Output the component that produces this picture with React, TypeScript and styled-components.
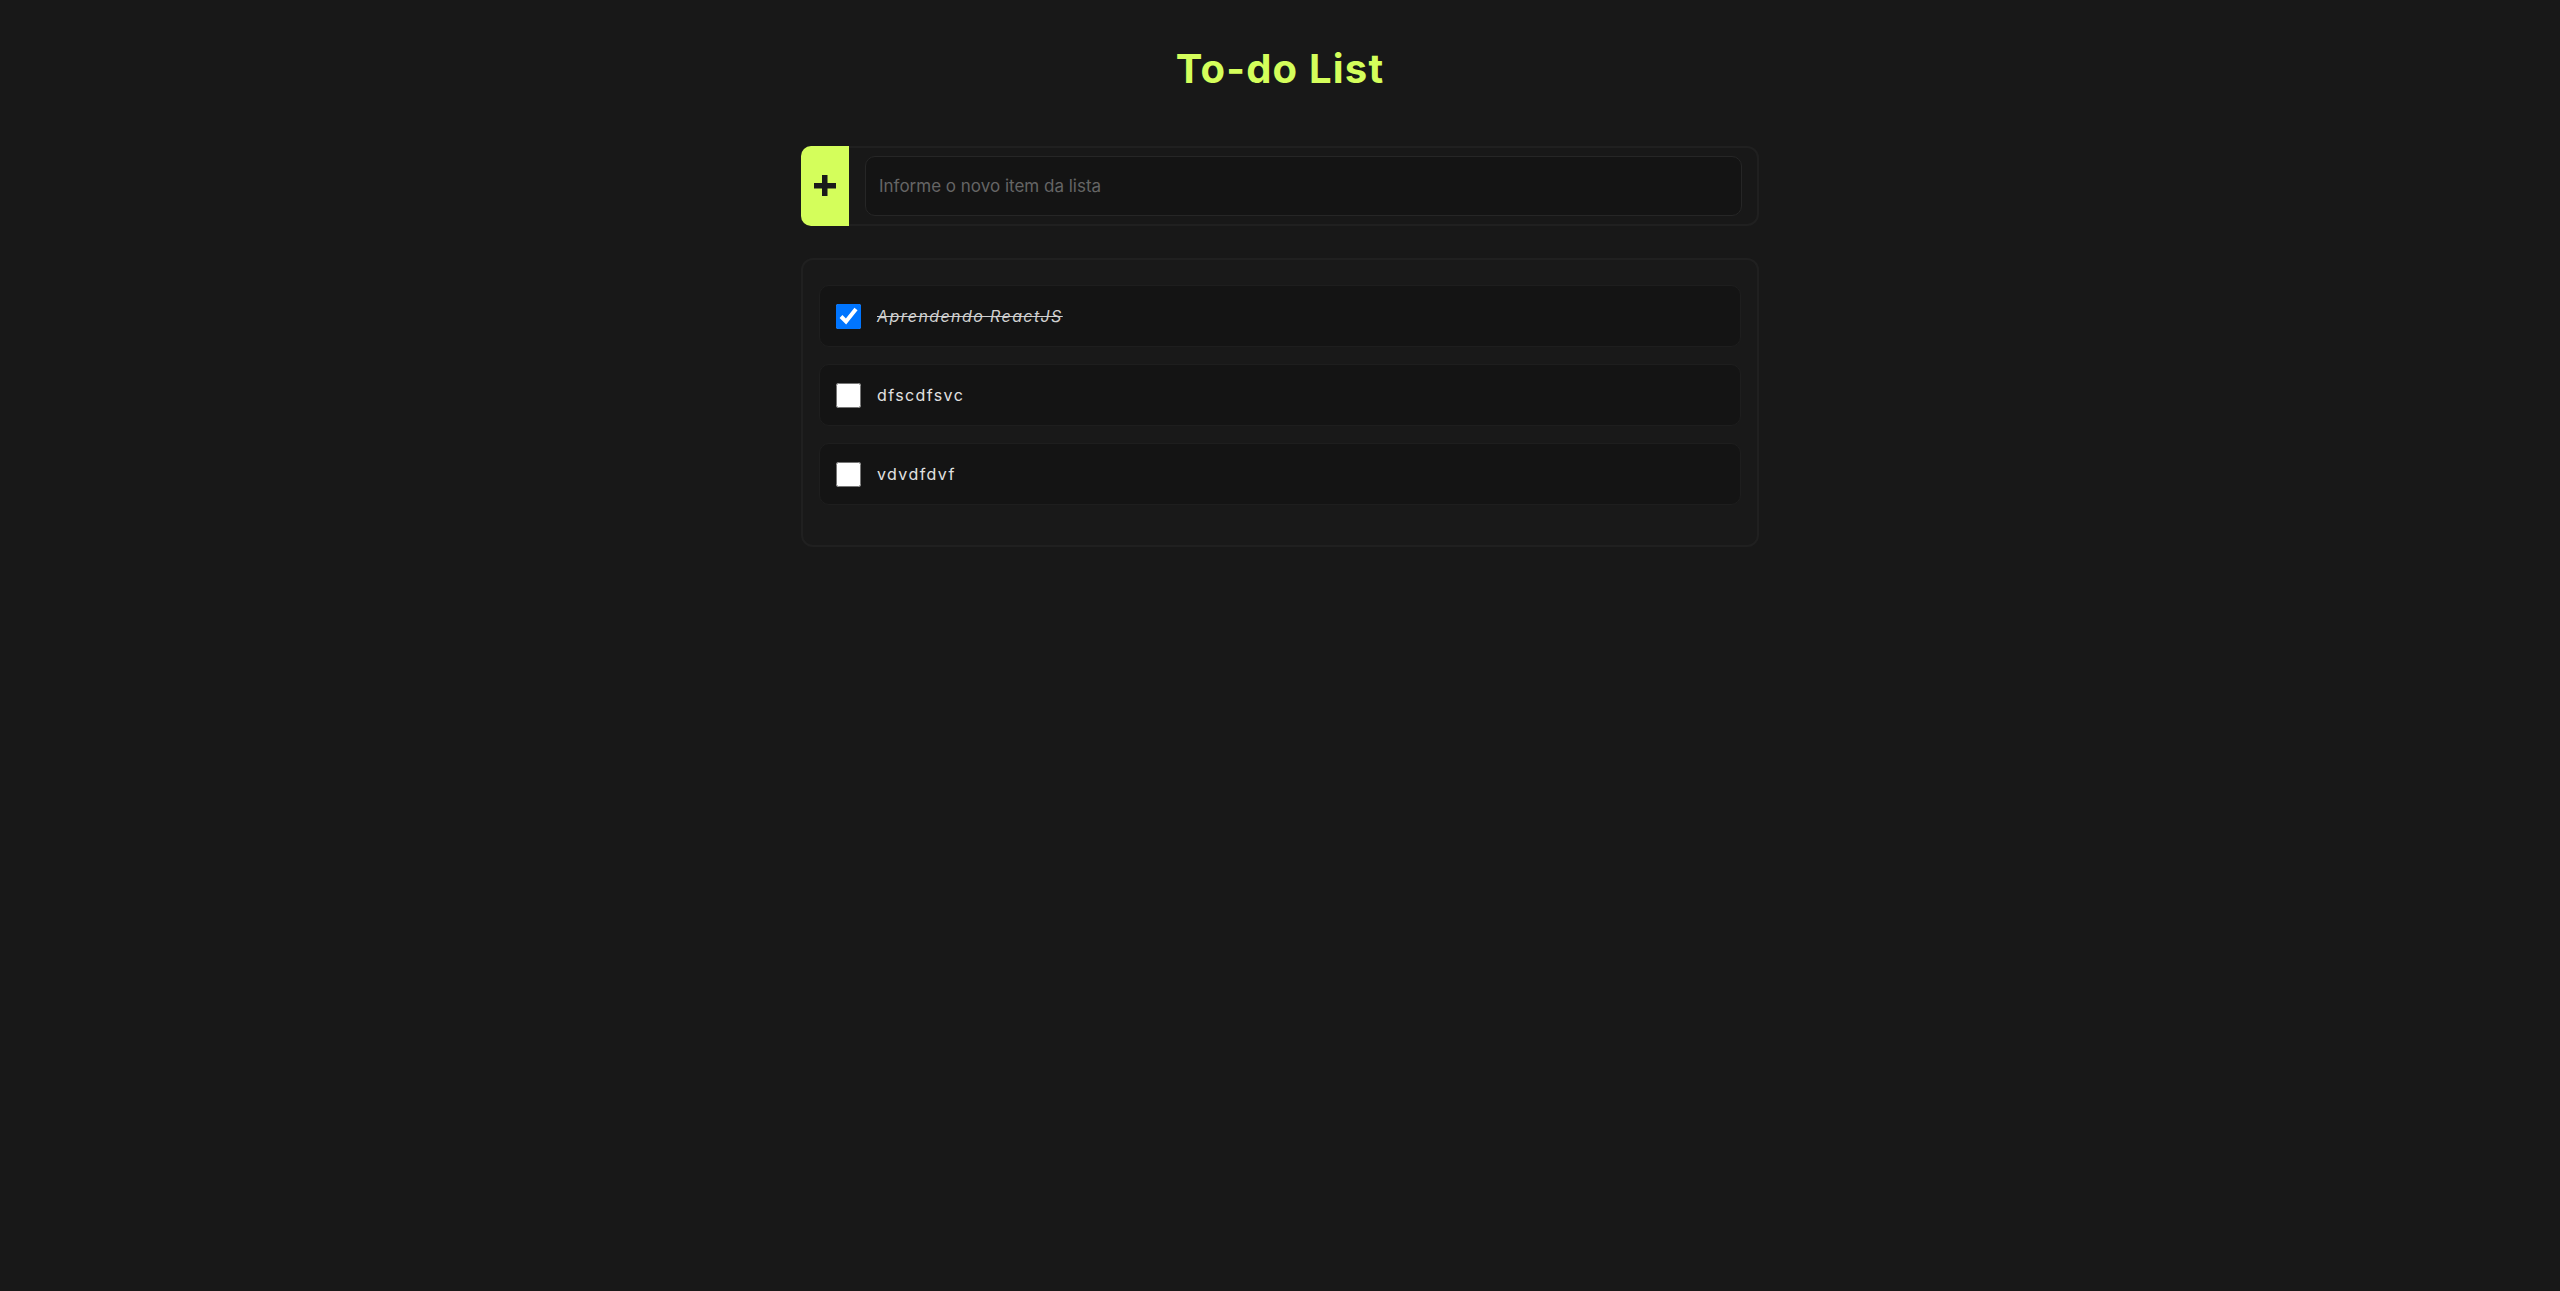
import React, { useState } from "react";
import styled, { createGlobalStyle } from "styled-components";

const GlobalStyle = createGlobalStyle`
  html, body {
    margin: 0;
    padding: 0;
    background: #181818;
  }
  body {
    font-family: Inter, "Open Sans", "Noto Sans", sans-serif;
    color: #e0e0e0;
  }
  * { box-sizing: border-box; }
`;

const Page = styled.main`
  width: 958px;
  margin: 0 auto;
  padding-top: 46px;
  display: flex;
  flex-direction: column;
`;

const Title = styled.h1`
  margin: 0 0 54px;
  height: 46px;
  line-height: 46px;
  text-align: center;
  font-family: Inter, "Noto Sans", sans-serif;
  font-weight: 700;
  font-size: 40px;
  color: #d4fe5b;
  letter-spacing: 1.2px;
`;

const Form = styled.form`
  display: flex;
  height: 80px;
  margin-bottom: 32px;
`;

const AddButton = styled.button`
  width: 48px;
  height: 80px;
  flex: none;
  border: none;
  padding: 0;
  background: #d4fe5b;
  border-radius: 10px 0 0 10px;
  display: flex;
  align-items: center;
  justify-content: center;
  cursor: pointer;
`;

const InputFrame = styled.div`
  flex: 1;
  display: flex;
  align-items: center;
  padding: 0 15px 0 16px;
  border: 2px solid #202020;
  border-left: none;
  border-radius: 0 12px 12px 0;
`;

const TextInput = styled.input`
  width: 100%;
  height: 60px;
  padding: 0 13px;
  background: #141414;
  border: 1px solid #262626;
  border-radius: 10px;
  font-family: Inter, "Noto Sans", sans-serif;
  font-size: 17px;
  color: #e0e0e0;
  outline: none;
  &::placeholder {
    color: #656565;
  }
`;

const ListCard = styled.section`
  display: flex;
  flex-direction: column;
  gap: 17px;
  padding: 25px 16px 40px;
  border: 2px solid #202020;
  border-radius: 12px;
  background: #191919;
`;

const Item = styled.label`
  display: flex;
  align-items: center;
  gap: 16px;
  height: 62px;
  padding: 0 16px;
  background: #141414;
  border: 1px solid #1e1e1e;
  border-radius: 10px;
`;

const Check = styled.input`
  width: 25px;
  height: 25px;
  margin: 0;
  flex: none;
`;

const ItemText = styled.span<{ $done: boolean }>`
  font-family: Inter, "Noto Sans", sans-serif;
  font-size: 16px;
  letter-spacing: 1.4px;
  color: ${(p) => (p.$done ? "#d0d0d0" : "#e2e2e2")};
  font-style: ${(p) => (p.$done ? "italic" : "normal")};
  text-decoration: ${(p) => (p.$done ? "line-through" : "none")};
`;

const PlusIcon = () => (
  <svg width="22" height="22" viewBox="0 0 22 22">
    <rect x="0" y="8" width="22" height="5.5" fill="#1a1a1a" />
    <rect x="8" y="0" width="5.5" height="21" fill="#1a1a1a" />
  </svg>
);

export default function App() {
  const [items, setItems] = useState([
    { id: 1, text: "Aprendendo ReactJS", done: true },
    { id: 2, text: "dfscdfsvc", done: false },
    { id: 3, text: "vdvdfdvf", done: false },
  ]);
  const [value, setValue] = useState("");

  const toggle = (id: number) =>
    setItems((list) => list.map((it) => (it.id === id ? { ...it, done: !it.done } : it)));

  const add = (e: React.FormEvent) => {
    e.preventDefault();
    if (!value.trim()) return;
    setItems((list) => [...list, { id: Date.now(), text: value, done: false }]);
    setValue("");
  };

  return (
    <>
      <GlobalStyle />
      <Page>
        <Title>To-do List</Title>
        <Form onSubmit={add}>
          <AddButton type="submit" aria-label="Adicionar">
            <PlusIcon />
          </AddButton>
          <InputFrame>
            <TextInput
              placeholder="Informe o novo item da lista"
              value={value}
              onChange={(e) => setValue(e.target.value)}
            />
          </InputFrame>
        </Form>
        <ListCard>
          {items.map((it) => (
            <Item key={it.id}>
              <Check type="checkbox" checked={it.done} onChange={() => toggle(it.id)} />
              <ItemText $done={it.done}>{it.text}</ItemText>
            </Item>
          ))}
        </ListCard>
      </Page>
    </>
  );
}
